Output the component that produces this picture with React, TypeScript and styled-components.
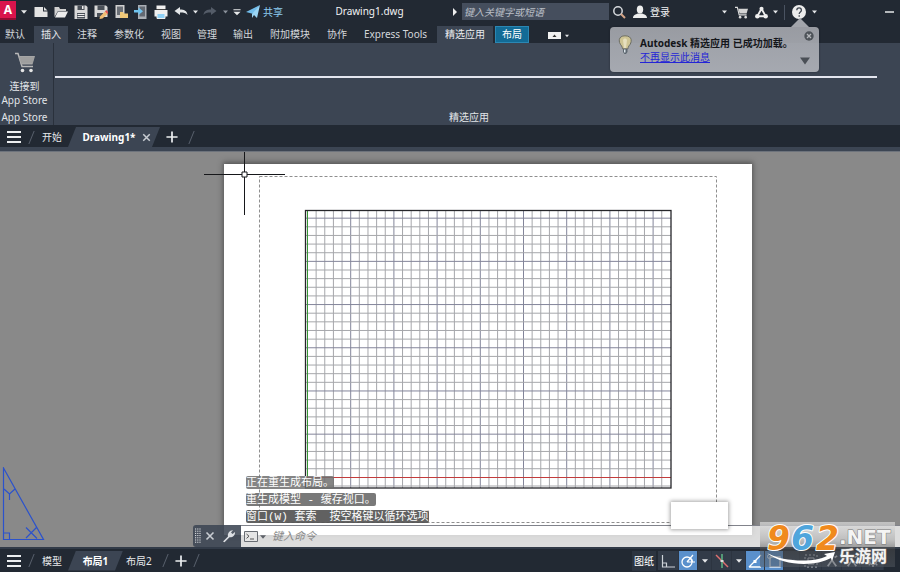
import React from "react";
import styled, { createGlobalStyle, css } from "styled-components";

const c = {
  bar: "#222933",
  panel: "#3c4553",
  panelDark: "#2c3440",
  canvas: "#898989",
  text: "#d4d7db",
  bright: "#f1f2f4",
  blue: "#5a90cc",
};

const Global = createGlobalStyle`
  * { box-sizing: border-box; }
  body { margin: 0; background: ${c.bar}; }
  button, input { font: inherit; color: inherit; border: 0; margin: 0; padding: 0; background: none; }
  svg { display: block; flex: none; }
`;

const Window = styled.div`
  position: relative;
  display: flex;
  flex-direction: column;
  height: 100vh;
  overflow: hidden;
  background: ${c.bar};
  color: ${c.text};
  font-family: "Noto Sans", "Noto Sans CJK SC", sans-serif;
  font-size: 10px;
  line-height: 14px;
`;

/* ---------- title bar ---------- */

const TitleBar = styled.header`
  display: flex;
  align-items: center;
  height: 26px;
  padding-bottom: 2px;
  flex: none;
`;

const LogoButton = styled.button`
  width: 16px;
  height: 19px;
  margin-bottom: 4px;
  background: #d9144c;
  border-bottom: 2px solid #8f0c33;
  color: #fff;
  font-weight: 700;
  font-size: 12px;
  line-height: 17px;
  text-align: center;
`;

const IconButton = styled.button<{ $w?: number }>`
  display: flex;
  align-items: center;
  justify-content: center;
  width: ${(p) => p.$w ?? 20}px;
  height: 20px;
  flex: none;
`;

const ShareButton = styled.button`
  display: flex;
  align-items: center;
  gap: 3px;
  margin-left: 3px;
  color: #8ecdf2;
`;

const Title = styled.h1`
  flex: 1;
  margin: 0;
  padding: 0 0 3px 8px;
  font-size: 10px;
  font-weight: 400;
  text-align: center;
  color: ${c.bright};
`;

const SearchInput = styled.input`
  width: 147px;
  height: 17px;
  padding: 0 2px;
  margin-bottom: 1px;
  background: #454e5d;
  font-style: italic;
  outline: none;
  &::placeholder { color: #b9bec6; opacity: 1; }
`;

const LoginButton = styled.button`
  display: flex;
  align-items: center;
  gap: 3px;
  width: 85px;
  margin-left: 4px;
  color: ${c.bright};
`;

const Separator = styled.span`
  width: 1px;
  height: 15px;
  margin: 0 4px;
  background: #4a5361;
`;

/* ---------- ribbon ---------- */

const RibbonTabs = styled.nav`
  display: flex;
  align-items: stretch;
  gap: 2px;
  height: 17px;
  margin-left: -2px;
  flex: none;
`;

const RibbonTab = styled.button<{ $kind?: "on" | "context"; $wide?: boolean }>`
  padding: 0 ${(p) => (p.$wide ? 8 : 7)}px;
  line-height: 17px;
  white-space: nowrap;
  ${(p) => p.$kind === "on" && css`background: ${c.panel}; color: #e8eaed;`}
  ${(p) =>
    p.$kind === "context" &&
    css`
      background: #126b96;
      box-shadow: inset 0 0 0 1px #2b87b3;
      color: #fff;
    `}
`;

const RibbonToggle = styled.button`
  display: flex;
  align-items: center;
  gap: 4px;
  margin-left: 17px;
  padding-top: 2px;
`;

const Ribbon = styled.section`
  display: flex;
  height: 82px;
  flex: none;
  background: ${c.panel};
`;

const StorePanel = styled.div`
  display: flex;
  flex-direction: column;
  justify-content: space-between;
  width: 54px;
  padding: 9px 0 1px;
  border-right: 1px solid #2a313c;
  color: #e1e4e8;
`;

const StoreButton = styled.button`
  display: flex;
  flex-direction: column;
  align-items: center;
  width: 49px;
  white-space: nowrap;
  svg { margin-bottom: 6px; }
`;

const PanelLabel = styled.span`
  width: 49px;
  text-align: center;
  white-space: nowrap;
`;

const FeaturedPanel = styled.div`
  display: flex;
  flex-direction: column;
  flex: 1;
  margin: 33px 23px 0 1px;
  padding: 0 0 1px 6px;
  border-top: 2px solid #e4e6ef;
  text-align: center;
  color: #e1e4e8;
`;

const PanelTitle = styled.span`
  margin-top: auto;
`;

/* ---------- document / layout tabs ---------- */

const TabStrip = styled.nav`
  display: flex;
  align-items: center;
  flex: none;
`;

const DocTabs = styled(TabStrip)`
  height: 26px;
  border-bottom: 4px solid ${c.panel};
  padding: 2px 0 0 4px;
`;

const Slash = styled.span`
  width: 1px;
  height: 13px;
  margin: 0 7px;
  background: #59616d;
  transform: skewX(-22deg);
`;

const PlainTab = styled.button`
  padding: 0 6px 0 3px;
  color: #e6e8eb;
`;

const ActiveTab = styled.div<{ $w: number; $lead?: number }>`
  display: flex;
  align-items: center;
  justify-content: center;
  gap: 6px;
  min-width: ${(p) => p.$w}px;
  height: 20px;
  padding-left: ${(p) => p.$lead ?? 0}px;
  background: ${c.panel};
  color: #fff;
  font-weight: 700;
  clip-path: polygon(8px 0, 100% 0, calc(100% - 8px) 100%, 0 100%);
`;

/* ---------- drawing area ---------- */

const Canvas = styled.main`
  position: relative;
  flex: 1;
  overflow: hidden;
  border-top: 1px solid #6d737c;
  background: ${c.canvas};
`;

const Sheet = styled.div`
  position: absolute;
  left: 224px;
  top: 12px;
  background: #fff;
  box-shadow: 0 -1px 5px 1px rgba(40, 40, 40, 0.55);
`;

const Crosshair = styled.svg`
  position: absolute;
  left: 204px;
  top: 0;
`;

const UcsIcon = styled.svg`
  position: absolute;
  left: 2px;
  bottom: 6px;
`;

const History = styled.div`
  position: absolute;
  left: 246px;
  bottom: 24px;
  display: flex;
  flex-direction: column;
  align-items: flex-start;
  gap: 4px;
  color: #fff;
  font-family: "Liberation Mono", "Noto Sans CJK SC", monospace;
  font-size: 11px;
  line-height: 15px;
  white-space: pre;
`;

const HistoryLine = styled.span<{ $shade: string }>`
  height: 13px;
  border-radius: 2px;
  background: ${(p) => p.$shade};
`;

const CommandBar = styled.div`
  position: absolute;
  left: 193px;
  right: 0;
  bottom: 0;
  display: flex;
  height: 22px;
`;

const CommandTools = styled.div`
  display: flex;
  align-items: center;
  width: 48px;
  padding-left: 2px;
  border-radius: 3px 0 0 3px;
  background: rgba(60, 69, 83, 0.88);
`;

const CommandField = styled.label`
  display: flex;
  align-items: center;
  flex: 1;
  gap: 2px;
  padding-left: 3px;
  border-top: 1px solid #81838b;
  background: rgba(255, 255, 255, 0.71);
`;

const CommandInput = styled.input`
  flex: 1;
  padding: 0 0 2px 4px;
  font-size: 11px;
  font-style: italic;
  outline: none;
  color: #333;
  &::placeholder { color: #8a8a8a; opacity: 1; }
`;

const BlankTip = styled.div`
  position: absolute;
  left: 671px;
  bottom: 18px;
  width: 57px;
  height: 27px;
  background: #fff;
  box-shadow: 0 0 4px 1px rgba(0, 0, 0, 0.35);
`;

/* ---------- status bar ---------- */

const StatusBar = styled.footer`
  display: flex;
  align-items: center;
  justify-content: space-between;
  height: 25px;
  flex: none;
  border-top: 2px solid #323b48;
`;

const LayoutTabs = styled(TabStrip)`
  height: 22px;
  padding-left: 4px;
`;

const StatusTools = styled.div`
  display: flex;
  align-items: center;
  height: 20px;
  padding-right: 16px;
`;

const SpaceButton = styled.button`
  height: 20px;
  margin-right: 2px;
  padding: 0 2px;
  background: ${c.panelDark};
  color: #fff;
`;

const StatusButton = styled.button<{ $on?: boolean; $w?: number }>`
  display: flex;
  align-items: center;
  justify-content: center;
  width: ${(p) => p.$w ?? 19}px;
  height: 19px;
  border-right: 1px solid ${c.panelDark};
  background: ${(p) => (p.$on ? c.blue : "#323b48")};
`;

/* ---------- notification ---------- */

const Bubble = styled.aside`
  position: absolute;
  top: 27px;
  right: 81px;
  width: 209px;
  height: 45px;
  padding: 9px 6px 0 30px;
  border-radius: 4px;
  background: linear-gradient(rgba(172, 174, 180, 0.86), rgba(172, 175, 182, 0.94));
  box-shadow: 0 0 2px rgba(20, 24, 30, 0.6);
  color: #14161a;
  white-space: nowrap;
  &::before {
    content: "";
    position: absolute;
    top: -9px;
    right: 10px;
    border: 9px solid transparent;
    border-top: 0;
    border-bottom-color: #a2a5ab;
  }
`;

const BubbleTitle = styled.strong`
  display: block;
`;

const BubbleLink = styled.a`
  color: #2424d6;
  text-decoration: underline;
`;

const BubbleBulb = styled.svg`
  position: absolute;
  left: 8px;
  top: 8px;
`;

const BubbleActions = styled.div`
  position: absolute;
  top: 4px;
  right: 5px;
  display: flex;
  flex-direction: column;
  align-items: flex-end;
  justify-content: space-between;
  height: 34px;
`;

/* ---------- site badge ---------- */

const Badge = styled.div`
  position: absolute;
  right: 5px;
  bottom: 5px;
  width: 135px;
  height: 45px;
  background: linear-gradient(rgba(225, 225, 225, 0.66), rgba(165, 165, 165, 0.55) 40%, rgba(75, 75, 75, 0.5) 60%, rgba(84, 90, 98, 0.5));
  svg { overflow: visible; }
`;

/* ---------- drawings ---------- */

const Caret = ({ color = "#e6e8ea", w = 6 }: { color?: string; w?: number }) => (
  <svg width={w} height="4" viewBox="0 0 6 4"><path d="M0 .3h6L3 3.7z" fill={color} /></svg>
);

const icons: Record<string, React.ReactNode> = {
  new: <path d="M.5 2H9v4.500h4.500V12H.5zM10 2l3.500 3.500H10z" fill="#e3e3e3" />,
  open: <><path d="M.5 2h4.500l1 2h6v2H4L.5 12z" fill="#d0d0d0" /><path d="M4 6.500h10L11 12.500H1z" fill="#ececec" /></>,
  save: <><path d="M.5 .5H12l1.500 1.500v12H.5z" fill="#d9d9d9" /><path d="M3.500 .5h7V5h-7zM3 8h8v5.500H3z" fill="#4a5058" /><path d="M3.500 9h7v1h-7zM3.500 11h7v1h-7zM8 1h1.500v3H8z" fill="#eee" /></>,
  saveAs: <><path d="M.5 .5H12l1.500 1.500v10H.5z" fill="#d9d9d9" /><path d="M3.500 .5h7V5h-7zM3 8h6v4H3z" fill="#4a5058" /><path d="M6 11.500l5-5 2.500 2.500-5 4.500-3 .5z" fill="#f0bd72" /><path d="M11 6.500L12.300 5l2 2.300L13.500 9z" fill="#e5514d" /></>,
  deviceOpen: <><path d="M1.500 0h9v13h-9z" fill="#d0d0d0" /><path d="M3 1.500h6V10H3z" fill="#6a6f76" /><path d="M6 7h3l1 1.500h4V13H6z" fill="#f0c878" /></>,
  deviceSave: <><path d="M4 0h8.500v14H4z" fill="#a9aeb5" /><path d="M5.500 1.500H11v10H5.500z" fill="#626973" /><path d="M0 5h4.500V2.500L9 6.200 4.500 10V7.500H0z" fill="#6fc3ef" /></>,
  print: <><path d="M2.500 .5h9V4h-9zM.5 5h13v6.500H.5z" fill="#efefef" /><path d="M3 8.500h8v5H3z" fill="#8fd0f5" stroke="#eee" /><path d="M2.500 4h9v1h-9z" fill="#444" /></>,
  undo: <path d="M6 2v2.500c4 0 7 1.200 7.500 5.500C12 8 10 7.500 6 7.500V10L.5 6z" fill="#e4e6e8" />,
  redo: <path d="M8 2v2.500c-4 0-7 1.200-7.500 5.500C2 8 4 7.500 8 7.500V10l5.500-4z" fill="#545c68" />,
  menu: <path d="M2 3h10v1.500H2zM2 6.500h10l-5 5z" fill="#e6e8ea" />,
  plane: <><path d="M0 7L14 0 7.500 9z" fill="#72bdeb" /><path d="M14 0l-3 13-3-3-2 3V9z" fill="#9ad5f5" /></>,
  search: <><circle cx="6" cy="6" r="4.200" fill="none" stroke="#d5d8dc" strokeWidth="1.500" /><path d="M9 9l4 4" stroke="#d5a486" strokeWidth="2" /></>,
  user: <><ellipse cx="7" cy="4.500" rx="3.200" ry="4" fill="#eee" /><path d="M0 13c0-3 2.500-3.500 5-4.500h4c2.500 1 5 1.500 5 4.500z" fill="#eee" /></>,
  cart: <><path d="M0 1.500h2.500l2 8h8" fill="none" stroke="#ddd" strokeWidth="1.200" /><path d="M3.500 3H14l-1.500 5H5z" fill="#d4d4d4" /><circle cx="5.500" cy="12" r="1.400" fill="#ddd" /><circle cx="11.500" cy="12" r="1.400" fill="#ddd" /></>,
  triad: <><path d="M7 3L2.500 11M7 3l4.500 8M2.500 11h9" stroke="#eee" strokeWidth="2" /><circle cx="7" cy="3" r="2.200" fill="#eee" /><circle cx="2.500" cy="11" r="2.400" fill="#eee" /><circle cx="11.500" cy="11" r="2.400" fill="#eee" /></>,
  help: <><circle cx="7" cy="7" r="7" fill="#ececec" /><path d="M4.800 5.200c0-3 4.600-3 4.600 0C9.400 7 7.200 7 7.200 9M7.200 10.300v1.500" fill="none" stroke="#3f4650" strokeWidth="1.300" /></>,
  close: <path d="M3.500 3.500l7 7M10.500 3.500l-7 7" stroke="#c9cdd3" strokeWidth="1.600" />,
  plus: <path d="M.5 7h13M7 .5v13" stroke="#eceef0" strokeWidth="2" />,
  lines: <path d="M0 2h14M0 7h14M0 12h14" stroke="#eceef0" strokeWidth="1.800" />,
  wrench: <path d="M1 12.500l5-5C5.200 4 8 .8 11 1.200L9 3.500l1.500 1.500L13 3c.5 3-2.500 5.800-5.500 5.300l-5 5z" fill="#dcdfe3" />,
  ortho: <path d="M1.500 1v12H14M1.500 9h4v4" fill="none" stroke="#cdd2d8" strokeWidth="1.200" />,
  polar: <><circle cx="6" cy="8" r="5" fill="none" stroke="#fff" strokeWidth="1.300" /><path d="M6 8L12 1M6 8h8M9 4c2 1 2.500 2.500 2.500 4" fill="none" stroke="#fff" strokeWidth="1.200" /></>,
  iso: <><path d="M1 1l12 12" stroke="#e07070" strokeWidth="1.400" /><path d="M7 0v14" stroke="#62c08a" strokeWidth="1.400" /><path d="M5.500 6h3v2h-3z" fill="#ddd" /></>,
  track: <><path d="M1 13L13 1M1 13h12" fill="none" stroke="#fff" strokeWidth="1.300" /><path d="M5.500 6h3v3h-3z" fill="#fff" /></>,
  osnap: <><path d="M3 3h10v10H3z" fill="none" stroke="#dfe9f5" strokeWidth="1.300" /><circle cx="2.500" cy="2.500" r="2" fill="none" stroke="#dfe9f5" /></>,
  select: <><path d="M1 1h12v12H1z" fill="none" stroke="#b4b9c0" strokeDasharray="2 2" /><path d="M4 4h6v6H4z" fill="none" stroke="#b4b9c0" /></>,
  scale: <path d="M7 6l-5 7M7 6l5 7M7 1v6M10 3l3-2" fill="none" stroke="#c0c4ca" strokeWidth="2" />,
  gear: <><circle cx="7" cy="7" r="4" fill="none" stroke="#c0c4ca" strokeWidth="2" /><path d="M7 0v3M7 11v3M0 7h3M11 7h3M2 2l2 2M10 10l2 2M12 2l-2 2M4 10l-2 2" stroke="#c0c4ca" strokeWidth="1.600" /></>,
};

const Icon = ({ name, size = 14 }: { name: string; size?: number }) => (
  <svg width={size} height={size} viewBox="0 0 14 14" aria-hidden="true">{icons[name]}</svg>
);

const range = (n: number) => Array.from({ length: n }, (_, i) => i);
const STEP = 8.64;
const MINOR = "#a6a7ab";
const MAJOR = "#83859a";

const SheetDrawing = () => (
  <svg width="528" height="371" viewBox="0 0 528 371">
    <rect x="35.5" y="12.5" width="457" height="346" fill="none" stroke="#8e8e8e" strokeDasharray="3 2" />
    {range(42).slice(1).map((i) => (
      <line key={`v${i}`} x1={83.500 + STEP * i} x2={83.500 + STEP * i} y1="47" y2="324" stroke={i % 5 ? MINOR : MAJOR} />
    ))}
    {range(32).filter((i) => i !== 1).map((i) => (
      <line key={`h${i}`} y1={322 - STEP * i} y2={322 - STEP * i} x1="81" x2="447" stroke={i % 5 === 1 ? MAJOR : MINOR} />
    ))}
    <rect x="83" y="47" width="1" height="277" fill="#369636" />
    <rect x="83" y="313" width="364" height="1" fill="#c23c3c" />
    <rect x="81.500" y="46.500" width="365.500" height="277.500" fill="none" stroke="#26262a" strokeWidth="1.300" />
  </svg>
);

const Cart = () => (
  <svg width="22" height="21" viewBox="0 0 22 21">
    <path d="M1 1.500h3l4 13h11" fill="none" stroke="#b8b8b8" strokeWidth="1.500" />
    <path d="M4.500 4H21l-2.500 8.500H7z" fill="#a6a6a6" />
    <path d="M6 6h14M6.500 8h13M7 10h12" stroke="#979797" />
    <circle cx="8.500" cy="18.500" r="1.800" fill="#e5e5e5" /><circle cx="17" cy="18.500" r="1.800" fill="#e5e5e5" />
  </svg>
);

const leadTabs = ["默认", "插入", "注释", "参数化", "视图", "管理", "输出", "附加模块", "协作", "Express Tools"];
const fileTools = [
  ["new", "新建"], ["open", "打开"], ["save", "保存"], ["saveAs", "另存为"],
  ["deviceOpen", "从设备打开"], ["deviceSave", "保存到设备"], ["print", "打印"],
];

export default function App() {
  return (
    <Window>
      <Global />
      <TitleBar>
        <LogoButton>A</LogoButton>
        <IconButton $w={15} aria-label="应用程序菜单"><Caret /></IconButton>
        {fileTools.map(([name, label]) => (
          <IconButton key={name} aria-label={label}><Icon name={name} /></IconButton>
        ))}
        <IconButton aria-label="放弃"><Icon name="undo" /></IconButton>
        <IconButton $w={9} aria-label="放弃列表"><Caret w={5} /></IconButton>
        <IconButton aria-label="重做"><Icon name="redo" /></IconButton>
        <IconButton $w={10} aria-label="重做列表"><Caret w={5} color="#8b929c" /></IconButton>
        <IconButton $w={13} aria-label="自定义"><Icon name="menu" size={10} /></IconButton>
        <ShareButton><Icon name="plane" />共享</ShareButton>
        <Title>Drawing1.dwg</Title>
        <IconButton $w={14} aria-label="展开搜索">
          <svg width="4" height="8" viewBox="0 0 4 8"><path d="M0 0l4 4-4 4z" fill="#eee" /></svg>
        </IconButton>
        <SearchInput placeholder="键入关键字或短语" aria-label="搜索" />
        <IconButton aria-label="查找"><Icon name="search" /></IconButton>
        <LoginButton><Icon name="user" />登录</LoginButton>
        <IconButton $w={12} aria-label="登录菜单"><Caret w={5} /></IconButton>
        <IconButton $w={22} aria-label="商店"><Icon name="cart" size={13} /></IconButton>
        <IconButton $w={18} aria-label="Autodesk"><Icon name="triad" size={13} /></IconButton>
        <IconButton $w={10} aria-label="Autodesk 菜单"><Caret w={5} /></IconButton>
        <Separator />
        <IconButton aria-label="帮助"><Icon name="help" /></IconButton>
        <IconButton $w={10} aria-label="帮助菜单"><Caret w={5} /></IconButton>
        <IconButton $w={81} aria-label="最小化">
          <svg width="70" height="2" viewBox="0 0 70 2"><path d="M60 1h9" stroke="#e6e8ea" strokeWidth="1.500" /></svg>
        </IconButton>
      </TitleBar>

      <RibbonTabs>
        {leadTabs.map((t) => (
          <RibbonTab key={t} $wide={t.length > 2} $kind={t === "插入" ? "on" : undefined}>{t}</RibbonTab>
        ))}
        <RibbonTab $kind="on" $wide>精选应用</RibbonTab>
        <RibbonTab $kind="context">布局</RibbonTab>
        <RibbonToggle aria-label="最小化功能区">
          <svg width="13" height="7" viewBox="0 0 13 7"><path d="M0 0h13v7H0z" fill="#f2f2f2" /><path d="M4.500 5l2-2.500 2 2.500z" fill="#333" /></svg>
          <Caret w={4} />
        </RibbonToggle>
      </RibbonTabs>

      <Ribbon>
        <StorePanel>
          <StoreButton><Cart /><span>连接到</span><span>App Store</span></StoreButton>
          <PanelLabel>App Store</PanelLabel>
        </StorePanel>
        <FeaturedPanel><PanelTitle>精选应用</PanelTitle></FeaturedPanel>
      </Ribbon>

      <DocTabs>
        <IconButton aria-label="文件选项卡菜单"><Icon name="lines" /></IconButton>
        <Slash />
        <PlainTab>开始</PlainTab>
        <ActiveTab $w={92} $lead={6}>
          Drawing1*
          <IconButton $w={10} aria-label="关闭"><Icon name="close" size={13} /></IconButton>
        </ActiveTab>
        <IconButton $w={24} aria-label="新图形"><Icon name="plus" size={12} /></IconButton>
        <Slash />
      </DocTabs>

      <Canvas>
        <Sheet><SheetDrawing /></Sheet>
        <Crosshair width="81" height="63" viewBox="0 0 81 63">
          <path d="M0 22.500h81M40.500 0v63" stroke="#16171a" />
          <path d="M38 20h5v5h-5z" fill="#fff" stroke="#16171a" />
        </Crosshair>
        <UcsIcon width="44" height="74" viewBox="0 0 44 74" fill="none" stroke="#2b52cc" strokeWidth="1.200">
          <path d="M1.500 1v71.500h40zM1.500 66h6v6M2 22l5.500 5L13 22M7.500 27v6M24 60.500l11 11M35 60L24 71" />
        </UcsIcon>
        <History>
          <HistoryLine $shade="rgba(112,112,112,.85)">正在重生成布局。</HistoryLine>
          <HistoryLine $shade="rgba(102,102,102,.88)">重生成模型 - 缓存视口。</HistoryLine>
          <HistoryLine $shade="rgba(84,84,84,.92)">窗口(W) 套索  按空格键以循环选项</HistoryLine>
        </History>
        <CommandBar>
          <CommandTools>
            <svg width="6" height="16" viewBox="0 0 6 16">
              {range(7).map((i) => <path key={i} d={`M0 ${1 + i * 2.200}h1.200M2.200 ${1 + i * 2.200}h1.200M4.400 ${1 + i * 2.200}h1.200`} stroke="#e4e6e9" />)}
            </svg>
            <IconButton $w={18} aria-label="关闭命令行"><Icon name="close" size={14} /></IconButton>
            <IconButton aria-label="自定义命令行"><Icon name="wrench" /></IconButton>
          </CommandTools>
          <CommandField>
            <svg width="14" height="11" viewBox="0 0 14 11"><path d="M.5 .5h13v10H.5z" fill="#e5e5e5" stroke="#686c72" /><path d="M2.500 3l2.500 2.200-2.500 2.200M6 8h4" fill="none" stroke="#555" /></svg>
            <Caret color="#5d6168" w={6} />
            <CommandInput placeholder="键入命令" aria-label="命令" />
          </CommandField>
        </CommandBar>
        <BlankTip />
      </Canvas>

      <StatusBar>
        <LayoutTabs>
          <IconButton aria-label="布局菜单"><Icon name="lines" /></IconButton>
          <Slash />
          <PlainTab>模型</PlainTab>
          <ActiveTab $w={55} as="button">布局1</ActiveTab>
          <PlainTab>布局2</PlainTab>
          <Slash />
          <IconButton $w={16} aria-label="新建布局"><Icon name="plus" size={12} /></IconButton>
          <Slash />
        </LayoutTabs>
        <StatusTools>
          <SpaceButton>图纸</SpaceButton>
          <StatusButton $w={21} aria-label="正交"><Icon name="ortho" /></StatusButton>
          <StatusButton $on aria-label="极轴"><Icon name="polar" /></StatusButton>
          <StatusButton $w={14} aria-label="极轴菜单"><Caret w={6} /></StatusButton>
          <StatusButton $w={20} aria-label="等轴测"><Icon name="iso" /></StatusButton>
          <StatusButton $w={14} aria-label="等轴测菜单"><Caret w={6} /></StatusButton>
          <StatusButton $on aria-label="对象追踪"><Icon name="track" /></StatusButton>
          <StatusButton $on aria-label="对象捕捉"><Icon name="osnap" /></StatusButton>
          <StatusButton $w={16} aria-label="捕捉菜单"><Caret color="#4e5764" /></StatusButton>
          <StatusButton $w={22} aria-label="选择循环"><Icon name="select" /></StatusButton>
          <StatusButton $w={20} aria-label="注释可见性"><Icon name="scale" size={12} /></StatusButton>
          <StatusButton $w={20} aria-label="自动缩放"><Icon name="scale" size={12} /></StatusButton>
          <StatusButton $w={22} aria-label="工作空间"><Icon name="gear" size={12} /></StatusButton>
        </StatusTools>
      </StatusBar>

      <Bubble>
        <BubbleBulb width="14" height="20" viewBox="0 0 14 20">
          <path d="M7 .8c8 0 7 7 4 10-.8 1-.9 2-1 3H4.500c0-1-.4-2-1-3C0 7 .2.8 7 .8z" fill="#cfc595" stroke="#6c6d64" />
          <path d="M5 5c1-2 3-2 4 0L8 13H6z" fill="#e6dfbe" />
          <path d="M5 14h4.500v3L8 19H6.500L5 17z" fill="#5c666f" /><path d="M6 14.500h1.500v3H6z" fill="#dbe4ea" />
        </BubbleBulb>
        <BubbleTitle>Autodesk 精选应用 已成功加载。</BubbleTitle>
        <BubbleLink href="#">不再显示此消息</BubbleLink>
        <BubbleActions>
          <button aria-label="关闭通知">
            <svg width="10" height="10" viewBox="0 0 10 10"><circle cx="5" cy="5" r="4.700" fill="#4e5359" /><path d="M3 3l4 4M7 3L3 7" stroke="#b6b8bc" strokeWidth="1.300" /></svg>
          </button>
          <button aria-label="更多">
            <svg width="18" height="8" viewBox="0 0 18 8"><path d="M4 .5h10L9 7.500z" fill="#4a4f56" /></svg>
          </button>
        </BubbleActions>
      </Bubble>

      <Badge>
        <svg width="135" height="45" viewBox="0 0 135 45" fontFamily="DejaVu Sans, Noto Sans CJK SC, sans-serif" fontWeight="700">
          <g fontSize="33" fontStyle="italic" stroke="#fff" strokeWidth="2" paintOrder="stroke" strokeLinejoin="round">
            <text x="7" y="28" fill="#f08a1d">9</text>
            <text x="31" y="28" fill="#4fa5dc">6</text>
            <text x="56" y="28" fill="#f08a1d">2</text>
          </g>
          <path d="M7 31c16 9 47 10 60 3l-3-2 11-2-3 9-1-3c-16 9-48 8-64-5z" fill="#fff" />
          <g fill="#f4f4f4" stroke="#777" strokeWidth="1" paintOrder="stroke">
            <text x="79" y="22" fontSize="20">.NET</text>
            <text x="79" y="40" fontSize="16">乐游网</text>
          </g>
        </svg>
      </Badge>
    </Window>
  );
}
